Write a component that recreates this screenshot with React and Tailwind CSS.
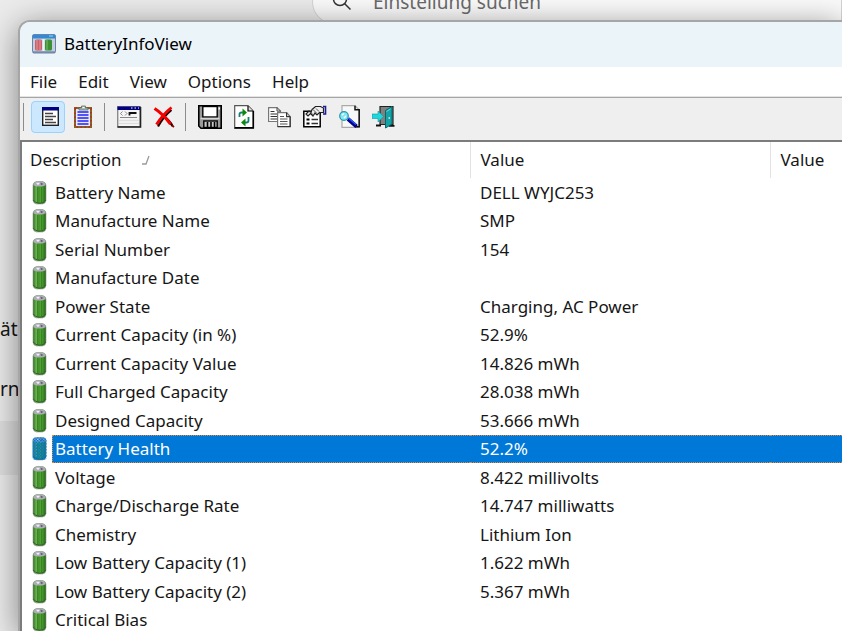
import React, { useState } from 'react';

const ROWS = [
  ['Battery Name', 'DELL WYJC253'],
  ['Manufacture Name', 'SMP'],
  ['Serial Number', '154'],
  ['Manufacture Date', ''],
  ['Power State', 'Charging, AC Power'],
  ['Current Capacity (in %)', '52.9%'],
  ['Current Capacity Value', '14.826 mWh'],
  ['Full Charged Capacity', '28.038 mWh'],
  ['Designed Capacity', '53.666 mWh'],
  ['Battery Health', '52.2%'],
  ['Voltage', '8.422 millivolts'],
  ['Charge/Discharge Rate', '14.747 milliwatts'],
  ['Chemistry', 'Lithium Ion'],
  ['Low Battery Capacity (1)', '1.622 mWh'],
  ['Low Battery Capacity (2)', '5.367 mWh'],
  ['Critical Bias', ''],
];

const MENUS = ['File', 'Edit', 'View', 'Options', 'Help'];

function BatteryIcon({ selected }) {
  return (
    <svg viewBox="0 0 16 24" className="w-4 h-6 shrink-0" aria-hidden="true">
      <defs>
        <linearGradient id="cell">
          <stop offset="0" stopColor="#2f6f20" />
          <stop offset="0.25" stopColor="#6fb254" />
          <stop offset="0.45" stopColor="#3c9024" />
          <stop offset="0.6" stopColor="#55a538" />
          <stop offset="0.8" stopColor="#3c8a26" />
          <stop offset="1" stopColor="#2b5f20" />
        </linearGradient>
        <pattern id="dither" width="3" height="3" patternUnits="userSpaceOnUse">
          <rect width="1.5" height="1.5" fill="#0078d7" />
          <rect x="1.5" y="1.5" width="1.5" height="1.5" fill="#0078d7" />
        </pattern>
      </defs>
      <path d="M2 4Q2.500 1 5.500 .5h6q3 .5 3.500 3.500v15.500q-.5 3-3.500 3.500h-6q-3-.5-3.500-3.500z" fill="url(#cell)" stroke="#8a9c86" strokeWidth=".6" />
      <path d="M2.300 19q1.500 3 6.200 3.200T14.700 19" fill="none" stroke="#3d5a38" />
      <path d="M2.300 4.200Q3 1 6 .6h5q3 .4 3.700 3.600-2 1.300-6.200 1.300T2.300 4.200z" fill="#aeadb8" />
      <path d="M5 1.800h4l-2 2.500z" fill="#f0f0f6" />
      <path d="M9.500 1.500l3 1.500-2.500 1.300z" fill="#625f78" />
      <path d="M6.500 6v15M10.500 6v15" stroke="#2f7a1d" strokeWidth=".7" />
      {selected && (
        <>
          <rect x="1.500" y=".5" width="14" height="22.500" rx="3" fill="#0078d7" opacity="0.3" />
          <rect x="1.500" y=".5" width="14" height="22.500" rx="3" fill="url(#dither)" />
        </>
      )}
    </svg>
  );
}

function AppIcon() {
  return (
    <svg viewBox="0 0 24 20" className="w-6 h-5" aria-hidden="true">
      <rect x=".5" y=".5" width="23" height="18.500" rx="1.500" fill="#c3cfdd" stroke="#6b83ab" />
      <path d="M1 1h22v3.500H1z" fill="#2f8bd8" />
      <path d="M17 2h4" stroke="#9fd0f5" />
      <rect x="3" y="5.500" width="7" height="11" rx="1.500" fill="#c9606a" />
      <path d="M5 6v10M8 6v10" stroke="#e79499" />
      <path d="M11.500 5v12" stroke="#eef3f8" strokeWidth="2" />
      <rect x="13" y="5.500" width="7" height="11" rx="1.500" fill="#3c8f32" />
      <path d="M15 6v10" stroke="#7cc070" />
      <path d="M1 18h22" stroke="#536a93" />
    </svg>
  );
}

function ListIcon() {
  return (
    <>
      <rect x="7.700" y="2.700" width="15.600" height="17.600" fill="#fff" stroke="#222" strokeWidth="1.400" />
      <path d="M7 2h17v3.500H7z" fill="#000080" />
      <path d="M10 8.500h8M10 11.500h11M10 14.500h8M10 17.500h11" stroke="#444" strokeWidth="1.300" />
    </>
  );
}

function ClipboardIcon() {
  return (
    <>
      <rect x="5" y="3" width="16" height="19" fill="#e8e6fa" stroke="#80691e" strokeWidth="2" />
      <rect x="5" y="3" width="16" height="19" fill="none" stroke="#b0312e" strokeWidth="2" strokeDasharray="1.500 2.500" />
      <path d="M7.500 7h11M7.500 10h11M7.500 13h11M7.500 16h11M7.500 19h11" stroke="#2222f0" strokeWidth="1.600" />
      <path d="M9 5V3h2.500V1h4v2H18v2z" fill="#a9bcb2" stroke="#5b7468" strokeWidth=".8" />
      <path d="M12.500 2.500h2" stroke="#fff" />
    </>
  );
}

function ChooseColumnsIcon() {
  return (
    <>
      <rect x="1.700" y="1.700" width="22.600" height="20" fill="#f6f6f6" stroke="#8a8a8a" strokeWidth="1.400" />
      <path d="M24.500 2v20H1.500" fill="none" stroke="#222" strokeWidth="1.600" />
      <path d="M1.500 1.500H24V5H1.500z" fill="#000080" />
      <path d="M15 3h1.500M18.500 3h1.500M22 3h1" stroke="#fff" strokeWidth="1.200" />
      <path d="M6.500 6.500l-2 2 2 2M9 6.500l2 2-2 2" fill="none" stroke="#888" />
      <path d="M13.500 10.500V8h7" fill="none" stroke="#111" strokeWidth="1.800" />
      <path d="M4 12.500h17" stroke="#888" strokeWidth="1.200" />
      <path d="M3 15.500h20M3 18.500h20" stroke="#dedede" strokeWidth="1.500" />
    </>
  );
}

function DeleteIcon() {
  return (
    <>
      <path d="M13 11.500Q19 16 21.500 21M20.500 5Q13 11 7 21.500" fill="none" stroke="#2a0000" strokeWidth="2.200" />
      <path d="M3.500 3.500Q11 8 19.500 19" fill="none" stroke="#f50000" strokeWidth="3.200" />
      <path d="M20.500 2.500Q12 9 5.500 19.500" fill="none" stroke="#f50000" strokeWidth="2.800" />
      <path d="M21 20.500l2 1.500" stroke="#8b0000" strokeWidth="1.800" />
    </>
  );
}

function SaveIcon() {
  return (
    <>
      <path d="M1.800.8h22.400v22.400H4l-2.200-2.200z" fill="#9a9a9a" stroke="#000" strokeWidth="1.600" />
      <rect x="5.800" y="1.500" width="14.400" height="10.500" fill="#fff" stroke="#000" strokeWidth="1.400" />
      <path d="M21.500 3.500h1.500" stroke="#fff" strokeWidth="1.800" />
      <path d="M3.500 13.500h19" stroke="#d5d5d5" strokeWidth="1.500" />
      <rect x="6.800" y="16" width="13.400" height="6.500" fill="#c8c8c8" stroke="#000" strokeWidth="1.400" />
      <path d="M10.500 17v6M14 17v6M17.500 17v6" stroke="#000" strokeWidth="1.600" />
    </>
  );
}

function RefreshIcon() {
  return (
    <>
      <path d="M2.700.7H16l5.300 5.300v17.300H2.700z" fill="#fff" stroke="#555" strokeWidth="1.200" />
      <path d="M21.300 6v16.800H2.700" fill="none" stroke="#000" strokeWidth="1.600" />
      <path d="M16 1v5h5" fill="#ddd" stroke="#000" strokeWidth="1.200" />
      <path d="M7.500 12V9q0-1.500 2-1.500h1.500M16.500 12v3.500q0 2-2 2h-1.500" fill="none" stroke="#15807a" strokeWidth="1.800" />
      <path d="M10.500 3.500l4.500 4-4.500 4z" fill="#0a8a0a" />
      <path d="M13.500 13.500L9 17.500l4.500 4z" fill="#0a8a0a" />
    </>
  );
}

function CopyIcon() {
  return (
    <>
      <path d="M1.600 2.600h8.400l3.500 3.500v10.400H1.600z" fill="#fff" stroke="#777" strokeWidth="1.200" />
      <path d="M10 2.600v3.500h3.500" fill="none" stroke="#444" />
      <path d="M3.500 6.500h4M3.500 9h7M3.500 11.500h7M3.500 14h7" stroke="#333" strokeWidth="1.200" />
      <path d="M10.600 7.600h9l3.500 4v9.900H10.600z" fill="#fff" stroke="#777" strokeWidth="1.200" />
      <path d="M23.200 11.600V21.700H10.600M19.600 7.600v4h3.600" fill="none" stroke="#333" strokeWidth="1.200" />
      <path d="M13 11.500h4M13 14h7.500M13 16.500h7.500M13 19h7.500" stroke="#555" />
    </>
  );
}

function PropertiesIcon() {
  return (
    <>
      <path d="M1.800 6.300h16.400v15.400H1.800z" fill="#fff" stroke="#000" strokeWidth="1.500" />
      <path d="M4.500 14.500h3M4.500 18.500h3" stroke="#000" strokeWidth="1.800" />
      <path d="M9.500 14.500h6.500M9.500 18.500h6.500" stroke="#333" strokeWidth="1.500" />
      <path d="M10 4.500l3.500-3h5l3 1.500v4.500h-4L15 10l-2-2-2 3-2.500-2.500L6 11l-2-2 3-3 2 1.500z" fill="#eee" stroke="#222" strokeWidth="1.200" />
      <path d="M8 7l4 3.500M11 4.500l4 4M14 3.500l3 3" stroke="#555" />
      <path d="M21 1.500h2.500v7.500h-2.500" fill="none" stroke="#1a1a9c" strokeWidth="1.600" />
    </>
  );
}

function FindIcon() {
  return (
    <>
      <path d="M5 .7h13l4 4v17.600H5z" fill="#f8f8f8" stroke="#aaa" strokeWidth="1.200" />
      <path d="M18 .7v4h4.200v17h-4" fill="none" stroke="#111" strokeWidth="1.500" />
      <circle cx="7" cy="11" r="4.300" fill="#7fe9f5" stroke="#2b93a8" strokeWidth="1.200" />
      <path d="M5 10l2-1.500M7 13l2-2" stroke="#fff" strokeWidth="1.200" />
      <path d="M11 14l8.500 7.500" stroke="#00008b" strokeWidth="3.800" />
      <path d="M11.500 13l7.500 6.500" stroke="#2255ff" strokeWidth="1.600" />
    </>
  );
}

function ExitIcon() {
  return (
    <>
      <path d="M8 1.500h13v18H8z" fill="#808080" stroke="#222" strokeWidth="1.200" />
      <path d="M4 20.500h5M17 20.800h5.500" stroke="#111" strokeWidth="1.800" />
      <path d="M13.500 5.500l6.500-4v17.500l-6.500 4z" fill="#15a3a8" stroke="#04696c" />
      <path d="M14.500 6.500l4-2.500" stroke="#5fe0e0" />
      <path d="M16.500 13h1.500" stroke="#eee" strokeWidth="1.500" />
      <path d="M0 9h6V6l5.500 5.500L6 17v-3.500H0z" fill="#1fd6dc" stroke="#0a9ca3" strokeWidth=".6" />
    </>
  );
}

const TOOL_GROUPS = [
  [
    { label: 'Properties View', Icon: ListIcon, pressed: true },
    { label: 'Battery Log', Icon: ClipboardIcon },
  ],
  [
    { label: 'Choose Columns', Icon: ChooseColumnsIcon },
    { label: 'Clear Log', Icon: DeleteIcon },
  ],
  [
    { label: 'Save', Icon: SaveIcon },
    { label: 'Refresh', Icon: RefreshIcon },
    { label: 'Copy', Icon: CopyIcon },
    { label: 'Properties', Icon: PropertiesIcon },
    { label: 'Find', Icon: FindIcon },
    { label: 'Exit', Icon: ExitIcon },
  ],
];

function Toolbar() {
  return (
    <div role="toolbar" className="flex items-start h-[43px] pt-[3px] pl-[3px] bg-[#efefef] border-t border-[#a5a5a5]">
      {TOOL_GROUPS.map((group, i) => (
        <div key={i} className="flex items-center">
          <div className="w-px h-7 bg-[#8c8c8c] mr-[7px]" />
          <div className="flex gap-px pr-1">
            {group.map(({ label, Icon, pressed }) => (
              <button
                key={label}
                type="button"
                aria-label={label}
                aria-pressed={pressed}
                className={`w-[34px] h-8 flex items-center justify-center rounded border ${
                  pressed ? 'bg-[#cce8ff] border-[#99d1ff]' : 'border-transparent hover:bg-[#e5f3ff]'
                }`}
              >
                <svg viewBox="0 0 26 24" className="w-[26px] h-6 shrink-0" aria-hidden="true">
                  <Icon />
                </svg>
              </button>
            ))}
          </div>
        </div>
      ))}
    </div>
  );
}

function BatteryTable({ selected, onSelect }) {
  return (
    <table className="w-full table-fixed border-collapse text-left">
      <colgroup>
        <col className="w-[448px]" />
        <col className="w-[300px]" />
        <col />
      </colgroup>
      <thead>
        <tr className="h-9">
          <th className="p-0 pl-2 font-normal border-r border-[#e2e2e2]">
            <span className="flex items-center gap-5">
              Description
              <svg viewBox="0 0 10 10" className="w-2.5 h-2.5" aria-hidden="true">
                <path d="M1 9h4L8 1" fill="none" stroke="#9a9a9a" strokeWidth="1.300" />
              </svg>
            </span>
          </th>
          <th className="p-0 pl-2.5 font-normal border-r border-[#e2e2e2]">Value</th>
          <th className="p-0 pl-2.5 font-normal">Value</th>
        </tr>
      </thead>
      <tbody>
        {ROWS.map(([name, value]) => {
          const active = name === selected;
          const fill = active
            ? 'bg-[#0078d7] text-white border-y border-dotted border-[#e08a3c]'
            : 'border-y border-transparent';
          return (
            <tr key={name} onClick={() => onSelect(name)} className="odd:h-[29px] even:h-7 whitespace-nowrap">
              <td className="p-0 pl-[9px]">
                <div className="flex items-center h-7 gap-[5px]">
                  <BatteryIcon selected={active} />
                  <span className={`flex flex-1 items-center h-7 pl-[2px] border-l ${fill}`}>{name}</span>
                </div>
              </td>
              <td className="p-0">
                <div className={`flex items-center h-7 pl-2.5 ${fill}`}>{value}</div>
              </td>
              <td className="p-0">
                <div className={`h-7 ${fill}`} />
              </td>
            </tr>
          );
        })}
      </tbody>
    </table>
  );
}

function App() {
  const [selected, setSelected] = useState('Battery Health');

  return (
    <div className="relative h-screen overflow-hidden bg-[#ebebeb] font-['Noto_Sans','Open_Sans',sans-serif] text-[17px] leading-6 text-[#161616]">
      {/* Settings page behind the window */}
      <div className="h-5 pl-[312px]">
        <label className="flex items-center gap-[21px] h-11 -mt-5 pl-[19px] rounded-l-full bg-[#fafafa] border border-[#d4d4d4]">
          <svg viewBox="0 0 20 20" className="w-5 h-5 shrink-0" aria-hidden="true">
            <circle cx="8" cy="7" r="6.500" fill="none" stroke="#333" strokeWidth="1.500" />
            <path d="M12.500 11.500l6 6" stroke="#333" strokeWidth="1.500" />
          </svg>
          <input
            type="text"
            placeholder="Einstellung suchen"
            aria-label="Einstellung suchen"
            className="flex-1 bg-transparent outline-none text-[19px] placeholder:text-[#6a6a6a]"
          />
        </label>
      </div>
      <div className="w-8 pt-[317px] text-[19px]">
        <p className="h-[60px]">äte</p>
        <p className="h-11">rne</p>
        <div className="h-[54px] bg-black/5" />
      </div>

      {/* BatteryInfoView window */}
      <main className="absolute left-[18px] top-5 right-0 bottom-0 flex flex-col overflow-hidden rounded-tl-xl bg-white border-t-2 border-l-2 border-[#a6a6a6] shadow-[0_6px_32px_rgba(0,0,0,0.45)]">
        <header className="flex items-center gap-2 h-[45px] shrink-0 pl-3 pb-[2px] bg-[#ebf4f9]">
          <AppIcon />
          <h1 className="text-black">BatteryInfoView</h1>
        </header>
        <nav className="flex items-center gap-[21px] h-[30px] shrink-0 pl-2.5 border-b border-[#e4e4e4]">
          {MENUS.map(menu => (
            <button key={menu} type="button">{menu}</button>
          ))}
        </nav>
        <Toolbar />
        <section className="flex-1 overflow-hidden border-t-2 border-l-2 border-[#7c7c7c]">
          <BatteryTable selected={selected} onSelect={setSelected} />
        </section>
      </main>
    </div>
  );
}

export default App;
